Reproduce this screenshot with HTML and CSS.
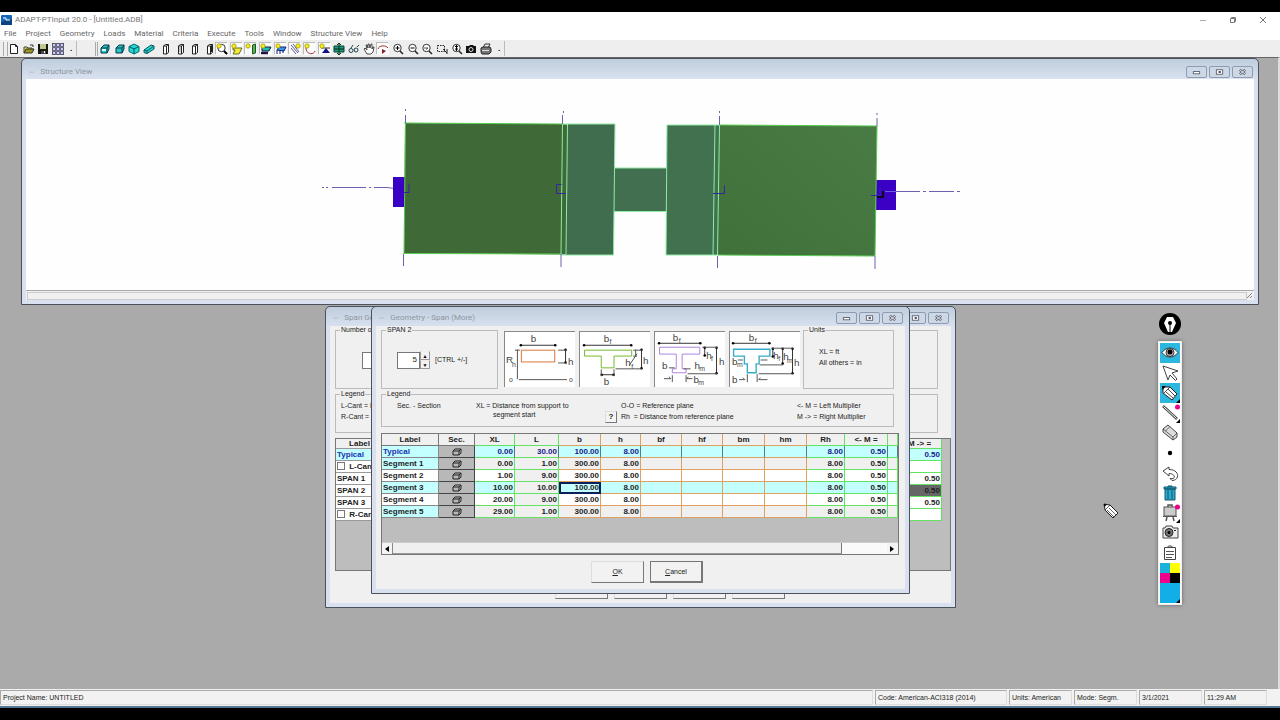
FILE: index.html
```
<!DOCTYPE html>
<html lang="en">
<head>
<meta charset="utf-8">
<title>ADAPT-PTInput 20.0 - [Untitled.ADB]</title>
<link rel="stylesheet" href="styles.css">
</head>
<body>
<svg class="defs" aria-hidden="true">
  <symbol id="min" viewBox="0 0 10 8"><rect x="1.5" y="3.5" width="7" height="2.5" fill="#fff" stroke="#5b6070"/></symbol>
  <symbol id="max" viewBox="0 0 10 8"><rect x="1.5" y="1.5" width="7" height="5" fill="#fff" stroke="#5b6070"/><rect x="4" y="3" width="2.500" height="2" fill="#445"/></symbol>
  <symbol id="cls" viewBox="0 0 10 8"><path d="M2 1.500l6 5M8 1.500l-6 5" stroke="#5b6070" stroke-width="2.600"/><path d="M2 1.500l6 5M8 1.500l-6 5" stroke="#fff"/></symbol>
  <symbol id="sec" viewBox="0 0 12 10"><path d="M2 4h6v4H2zM2 4l2-2h6v4L8 8M8 4l2-2" fill="none" stroke="#222"/></symbol>
  <symbol id="slab" viewBox="0 0 12 12"><path d="M2 5l3-3h5v4L8 10H2z" fill="#20c8c8" stroke="#134" /><path d="M2 5h6l2-3M8 5v5" fill="none" stroke="#134"/></symbol>
  <symbol id="col" viewBox="0 0 12 12"><path d="M3.500 3l2-1.500h3v8l-2 1.500h-3zM3.500 3h3v8M6.500 3l2-1.500" fill="#fff" stroke="#222"/></symbol>
  <symbol id="sun" viewBox="0 0 6 6"><circle cx="3" cy="3" r="2.200" fill="#f4ee20" stroke="#998c10" stroke-width=".7"/></symbol>
  <symbol id="lens" viewBox="0 0 12 12"><circle cx="5.500" cy="5" r="3.700" fill="#fff" stroke="#333"/><path d="M8 8l3 3" stroke="#222" stroke-width="1.500"/></symbol>
  <symbol id="arr" viewBox="0 0 4 4"><path d="M4 0v4H0z" fill="#000"/></symbol>
  <marker id="e" markerWidth="4" markerHeight="4" refX="2" refY="2"><circle cx="2" cy="2" r="1.300"/></marker>
</svg>

<div class="app">
  <header class="titlebar">
    <svg class="logo" viewBox="0 0 11 10"><rect width="11" height="10" rx="1" fill="#1667b8"/><path d="M0 7l11-3v6H0z" fill="#0b4384"/><path d="M2 3h3v2h4" stroke="#fff" fill="none"/></svg>
    <h1 class="apptitle">ADAPT-PTInput 20.0 - [Untitled.ADB]</h1>
    <div class="syscontrols">
      <button aria-label="Minimize"><svg viewBox="0 0 8 8"><path d="M1 4.500h6" stroke="#aaa"/></svg></button>
      <button aria-label="Restore"><svg viewBox="0 0 8 8"><path d="M1.500 2.500h4v4h-4zM2.500 2.500v-1h4v4h-1" fill="none" stroke="#777"/></svg></button>
      <button aria-label="Close"><svg viewBox="0 0 8 8"><path d="M1 1l6 6M7 1L1 7" stroke="#777"/></svg></button>
    </div>
  </header>
  <nav class="menubar">
    <button>File</button><button>Project</button><button>Geometry</button><button>Loads</button><button>Material</button><button>Criteria</button><button>Execute</button><button>Tools</button><button>Window</button><button>Structure View</button><button>Help</button>
  </nav>
  <div class="toolbar">
    <div class="group files">
      <button aria-label="New"><svg viewBox="0 0 12 12"><path d="M2.500 1.500h5l2 2v7h-7zM7.500 1.500v2h2" fill="#fff" stroke="#222"/></svg></button>
      <button aria-label="Open"><svg viewBox="0 0 12 12"><path d="M1 10V4h3l1 1h4v2" fill="#e8e060" stroke="#443"/><path d="M1 10l2-4h8l-2 4z" fill="#9a9420" stroke="#332"/><path d="M7 2h3v2" fill="none" stroke="#333"/></svg></button>
      <button aria-label="Save"><svg viewBox="0 0 12 12"><path d="M1 1h10v10H1z" fill="#16180e"/><path d="M3 1h6v5H3z" fill="#bfc690"/><path d="M4 8h5v3H4z" fill="#445"/><path d="M7 8h1v2H7z" fill="#fff"/></svg></button>
      <button aria-label="Calculator"><svg viewBox="0 0 12 12"><path d="M0 0h12v12H0z" fill="#556"/><path d="M1 1h2v2H1zM5 1h2v2H5zM9 1h2v2H9zM1 5h2v2H1zM5 5h2v2H5zM9 5h2v2H9zM1 9h2v2H1zM5 9h2v2H5zM9 9h2v2H9z" fill="#ccf"/><path d="M4 0v12M8 0v12M0 4h12M0 8h12" stroke="#88a" stroke-width=".8"/></svg></button>
    </div>
    <span class="more">.</span>
    <span class="sep"></span>
    <span class="grip"></span>
    <div class="group views">
      <button aria-label="Top view"><svg><use href="#slab"/><path d="M3 6h4v2H3z" fill="#cff"/></svg></button>
      <button aria-label="Front view"><svg><use href="#slab"/></svg></button>
      <button aria-label="Isometric"><svg viewBox="0 0 12 12"><path d="M6 1l5 2.500v5L6 11 1 8.500v-5z" fill="#20d8d8" stroke="#166"/><path d="M1 3.500L6 6l5-2.500M6 6v5" fill="none" stroke="#055"/></svg></button>
      <button aria-label="Slab"><svg viewBox="0 0 12 12"><path d="M1 7l7-5 3 1v3L4 10.500 1 9.500z" fill="#20d8d8" stroke="#155"/><path d="M1 7l3 1 7-5M4 8v2.500" fill="none" stroke="#155"/></svg></button>
    </div>
    <div class="group sections">
      <button aria-label="Section 1"><svg><use href="#col"/></svg></button>
      <button aria-label="Section 2"><svg><use href="#col"/><path d="M5 4v5" stroke="#888"/></svg></button>
      <button aria-label="Section 3"><svg><use href="#col"/></svg></button>
      <button aria-label="Section 4"><svg><use href="#col"/><path d="M7.500 3v6" stroke="#222" stroke-width="2"/></svg></button>
    </div>
    <div class="group tools">
      <button class="on" aria-label="Find"><svg><use href="#lens"/><use href="#sun" width="6" height="6"/><path d="M8 8l3 3" stroke="#000" stroke-width="2"/></svg></button>
      <button class="on" aria-label="Slab display"><svg><path d="M2 11l2-4H2V5h9L8 11z" fill="#f2ec30" stroke="#663"/><use href="#sun" width="6" height="6"/></svg></button>
      <button class="on" aria-label="Column display"><svg><path d="M7.500 2l3-1v9l-3 1z" fill="#50b850" stroke="#252"/><use href="#sun" width="6" height="6"/></svg></button>
      <button class="on" aria-label="Beam display"><svg><path d="M2 4h9l-2 4H2z" fill="#20bcb8" stroke="#123"/><path d="M1 10h7" stroke="#214" stroke-width="2.500"/><use href="#sun" width="6" height="6"/></svg></button>
      <button class="on" aria-label="Load display"><svg><path d="M2 7l2-3h7l-2 4z" fill="#39e" stroke="#127"/><path d="M2 7v4M5 7v4M8 7v3" stroke="#127"/><use href="#sun" width="6" height="6"/></svg></button>
      <button class="on" aria-label="Tendon display"><svg><path d="M2 2l7 8M4 1l6 8M2 5l5 6" stroke="#337" stroke-width=".8"/><use href="#sun" x="6" width="6" height="6"/></svg></button>
      <button class="on" aria-label="Curve"><svg><path d="M2 5c0 7 8 7 9 3" fill="none" stroke="#933"/><use href="#sun" width="6" height="6"/></svg></button>
      <button class="on" aria-label="Support"><svg><path d="M2 5h9" stroke="#333"/><path d="M7 5l4 5H3z" fill="#118"/><use href="#sun" width="6" height="6"/></svg></button>
      <button aria-label="Extrude"><svg><path d="M1 3h10v6H1z" fill="#219682" stroke="#043"/><path d="M6 0v12M4 2l2-2 2 2M4 10l2 2 2-2M1 6h10" fill="none" stroke="#031"/></svg></button>
      <button aria-label="Glasses"><svg><path d="M3 5L5 2M9 4l2-2M6 7h1" stroke="#245"/><circle cx="3" cy="7.500" r="2" fill="none" stroke="#245"/><circle cx="8" cy="7" r="2" fill="none" stroke="#245"/></svg></button>
      <button aria-label="Pan"><svg><path d="M4 11L1 6l1-1 2 2-1-5h1l1 3V1h1l1 4 1-4h1v5l1-2h1l-1 5-2 2z" fill="#fff" stroke="#222" stroke-width=".8"/></svg></button>
      <button class="on" aria-label="Rotate"><svg><path d="M1 6c1-4 8-4 10-1" fill="none" stroke="#933"/><path d="M5 6l4 2-4 3z" fill="#822"/></svg></button>
      <button aria-label="Zoom in"><svg><use href="#lens"/><path d="M3.500 5h4M5.500 3v4" stroke="#000"/></svg></button>
      <button aria-label="Zoom out"><svg><use href="#lens"/><path d="M3.500 5h4" stroke="#000"/></svg></button>
      <button aria-label="Zoom previous"><svg><use href="#lens"/><path d="M3 5h4l-2 1.500" fill="none" stroke="#555"/></svg></button>
      <button aria-label="Zoom window"><svg><path d="M1.500 2.500h7v6h-7z" fill="none" stroke="#222" stroke-dasharray="1.500 1"/><path d="M7 6l4 4M11 6v5" stroke="#222"/></svg></button>
      <button aria-label="Zoom extents"><svg><use href="#lens"/><path d="M5.500 2v6M4 3.500h3M4 6h3" stroke="#000"/></svg></button>
      <button aria-label="Camera"><svg><path d="M1 3h3l1-1h3l1 1h2v7H1z" fill="#111"/><circle cx="6" cy="6.500" r="2" fill="none" stroke="#ddd"/></svg></button>
      <button aria-label="Print"><svg><path d="M3 5l2-4h5L8 5z" fill="#eee" stroke="#333"/><path d="M1 5l2-1h7l1 2v3l-2 2H2L1 9z" fill="#777" stroke="#222"/><path d="M2 7.500h7" stroke="#ddd"/></svg></button>
    </div>
    <span class="more">.</span>
    <span class="sep"></span>
  </div>

  <main class="desktop">
    <section class="win structure">
      <div class="wintitle"><span class="dots">▫▫▫</span><h2>Structure View</h2>
        <div class="winbtns"><button aria-label="Minimize"><svg><use href="#min"/></svg></button><button aria-label="Maximize"><svg><use href="#max"/></svg></button><button aria-label="Close"><svg><use href="#cls"/></svg></button></div>
      </div>
      <svg class="drawing" viewBox="26 79 1228 211" role="img" aria-label="Plan of three spans">
        <defs>
          <linearGradient id="g" x1="0" y1="1" x2="1" y2="0"><stop offset="0" stop-color="#41713b"/><stop offset="1" stop-color="#497b44"/></linearGradient>
        </defs>
        <path d="M322 187.500h2M326 187.500h2M332 187.500h34M369 187.500h2M374 187.500h13l8 1M896 191.500h24M923 191.500h3M929 191.500h25M957 191.500h3" stroke="#6a62b0" fill="none"/>
        <path d="M393 177h12v30h-12zM876 180h20v30h-20z" fill="#3a00c4"/>
        <path d="M405 123L562 124 567 124.500V254.500L404 253z" fill="#3f6a37"/>
        <path d="M567 124H615L613.500 255H566z" fill="#416d4f"/>
        <path d="M614 168h53v43h-53z" fill="#426f50"/>
        <path d="M667 125h52v130h-53z" fill="#427150"/>
        <path d="M719 125l158 1-2 130-157-1z" fill="url(#g)"/>
        <path d="M405.500 123L404 254M404 123L562 124M404 253.500L562 254M719 125l158 1-2 130-157-1" stroke="#58cb50" fill="none"/>
        <path d="M562.500 124L561 254M567.500 124L566 254M562 124h53l-1.500 131H561M614 211.500h53M614 168h53M667 125h52M667 125l-1 130h52M715 125l-2 130M719.500 125l-2 130" stroke="#8deba3" fill="none"/>
        <path d="M405.500 109v2M405.500 115v8M403.500 254v12M563.500 111v2M562.500 115v9M561 254v13M719.500 111v2M719.500 116v9M717.500 256v12M877 113v2M877 118v8M875 256v13" stroke="#6c62b0" fill="none"/>
        <path d="M404 192.500h5v-9M566 193.500h-9.500v-9h5M713 193.500h11.500v-8M871 195.500h9v-8" stroke="#3426a0" fill="none"/>
        <path d="M877 197h6v-6" stroke="#100820" stroke-width="2" fill="none"/><path d="M885 191.500h11" stroke="#6a62e0"/>
      </svg>
      <div class="winstatus"><span></span><svg viewBox="0 0 6 7"><path d="M0 6l5-5M3 6l2-2" stroke="#888"/></svg></div>
    </section>

    <section class="win spans">
      <div class="wintitle"><span class="dots">▫▫▫</span><h2>Span Geometry</h2>
        <div class="winbtns"><button aria-label="Minimize"><svg><use href="#min"/></svg></button><button aria-label="Maximize"><svg><use href="#max"/></svg></button><button aria-label="Close"><svg><use href="#cls"/></svg></button></div>
      </div>
      <div class="body">
        <fieldset class="number"><legend>Number of Spans</legend><input class="count" type="text" value="3" aria-label="Number of spans"></fieldset>
        <fieldset class="backlegend"><legend>Legend</legend><p>L-Cant = Left Cantilever</p><p>R-Cant = Right Cantilever</p></fieldset>
        <div class="grid">
          <table class="back">
            <colgroup><col class="w-back"><col><col class="w-mult"></colgroup>
            <tr><th>Label</th><th></th><th>M -&gt; =</th></tr>
            <tr class="typical"><td class="name">Typical</td><td></td><td>0.50</td></tr>
            <tr><td class="name"><label><input type="checkbox"> L-Cant</label></td><td></td><td></td></tr>
            <tr><td class="name">SPAN 1</td><td></td><td>0.50</td></tr>
            <tr class="current"><td class="name">SPAN 2</td><td></td><td>0.50</td></tr>
            <tr><td class="name">SPAN 3</td><td></td><td>0.50</td></tr>
            <tr><td class="name"><label><input type="checkbox"> R-Cant</label></td><td></td><td></td></tr>
          </table>
        </div>
        <div class="actions"><button class="push">OK</button><button class="push">Cancel</button><button class="push">More</button><button class="push">Help</button></div>
      </div>
    </section>

    <section class="win segments">
      <div class="wintitle"><span class="dots">▫▫▫</span><h2>Geometry - Span (More)</h2>
        <div class="winbtns"><button aria-label="Minimize"><svg><use href="#min"/></svg></button><button aria-label="Maximize"><svg><use href="#max"/></svg></button><button aria-label="Close"><svg><use href="#cls"/></svg></button></div>
      </div>
      <div class="body">
        <div class="top">
          <fieldset class="span"><legend>SPAN 2</legend>
            <div class="spinrow"><input class="count" id="segs" type="text" value="5"><div class="spin"><button aria-label="More">▲</button><button aria-label="Fewer">▼</button></div><label for="segs">[CTRL +/-]</label></div>
          </fieldset>
          <div class="pics">
            <svg viewBox="0 0 71 56"><rect x="16.500" y="18.500" width="34" height="12" fill="#fff" stroke="#dd7435"/><g class="dim"><path d="M16 13.500H51M61.500 18V31"/><path class="plain" d="M12.500 18V48M10 18.500h5M54 18.500h9M54 31.500h9M14 48.500H63"/></g><text x="26" y="10">b</text><text x="1" y="32">R</text><text class="sub" x="7" y="36">h</text><text x="64" y="34">h</text><text class="sub" x="4" y="51">o</text><text class="sub" x="65" y="51">o</text></svg>
            <svg viewBox="0 0 71 56"><path d="M4.500 18.500H52.500V24.500H34.500V36.500H21.500V24.500H4.500z" fill="#fff" stroke="#74b92c"/><g class="dim"><path d="M4 13.500H52M22 43.500H34M62.500 18V37"/><path class="plain" d="M21.500 38v7M34.500 38v7M54 18.500h9M36 37.500h27M56.500 18v7M54 24.500h4M50 34l8-12"/></g><text x="24" y="10">b</text><text class="sub" x="30" y="12">f</text><text x="24" y="54">b</text><text x="46" y="35">h</text><text class="sub" x="52" y="38">f</text><text x="64" y="33">h</text></svg>
            <svg viewBox="0 0 71 56"><path d="M4.500 15.500H45.500V22.500H27.500V37.500H31.500V41.500H17.500V37.500H21.500V22.500H4.500z" fill="#fff" stroke="#ad83de"/><g class="dim"><path d="M4 11.500H46M62.500 16V42M50.500 16v8"/><path class="plain" d="M48 15.500h15M33 42.500h30M14 36.500h6M36 37.500h-7M17.500 44v7M31.500 44v7M9 47.500h7l-2-2M38 47.500h-6l2-2"/></g><text x="18" y="9">b</text><text class="sub" x="24" y="11">f</text><text x="7" y="38">b</text><text x="52" y="27">h</text><text class="sub" x="57" y="30">f</text><text x="65" y="34">h</text><text x="40" y="38">h</text><text class="sub" x="45" y="40">m</text><text x="39" y="52">b</text><text class="sub" x="44" y="54">m</text></svg>
            <svg viewBox="0 0 71 56"><path d="M3.500 17.500H40.500V24.500H29.500V32.500H26.500V41.500H17.500V32.500H14.500V24.500H3.500z" fill="#fff" stroke="#35adc9" stroke-width="1.400"/><g class="dim"><path d="M3 11.500H40M43.500 17v8M53.500 17v15M63.500 17V42"/><path class="plain" d="M42 16.500h22M30 33.500h24M29 42.500h35M8 28.500h5M31 28.500h7M17.500 43v8M27.500 43v8M9 48.500h6l-2-2M38 48.500h-9l2-2"/></g><text x="19" y="9">b</text><text class="sub" x="25" y="11">f</text><text x="2" y="34">b</text><text class="sub" x="7" y="36">m</text><text x="2" y="52">b</text><text x="44" y="27">h</text><text class="sub" x="49" y="30">f</text><text x="54" y="29">h</text><text class="sub" x="58" y="32">m</text><text x="65" y="35">h</text></svg>
          </div>
          <fieldset class="units"><legend>Units</legend><p>XL = ft</p><p>All others = in</p></fieldset>
        </div>
        <fieldset class="legendbox"><legend>Legend</legend>
          <p class="abbr">Sec. - Section</p>
          <p class="dist">XL = Distance from support to<br><span class="indent">segment start</span></p>
          <button class="help">?</button>
          <p>O-O = Reference plane<br>Rh&nbsp; = Distance from reference plane</p>
          <p>&lt;- M = Left Multiplier<br>M -&gt; = Right Multiplier</p>
        </fieldset>
        <div class="grid">
          <table class="front">
            <colgroup><col class="w57"><col class="w36"><col class="w40"><col class="w44"><col class="w42"><col class="w40"><col class="w41"><col class="w41"><col class="w42"><col class="w42"><col class="w38"><col class="w43"><col></colgroup>
            <tr><th>Label</th><th>Sec.</th><th class="g">XL</th><th class="g">L</th><th>b</th><th>h</th><th>bf</th><th>hf</th><th>bm</th><th>hm</th><th class="g">Rh</th><th class="g">&lt;- M =</th><th class="g"></th></tr>
            <tr class="typical cyan"><td class="name">Typical</td><td class="sec"><button aria-label="Section"><svg><use href="#sec"/></svg></button></td><td class="g">0.00</td><td class="g len">30.00</td><td>100.00</td><td>8.00</td><td></td><td></td><td></td><td></td><td class="g">8.00</td><td class="g">0.50</td><td class="g"></td></tr>
            <tr class="gray"><td class="name tint">Segment 1</td><td class="sec"><button aria-label="Section"><svg><use href="#sec"/></svg></button></td><td class="g">0.00</td><td class="g len">1.00</td><td>300.00</td><td>8.00</td><td></td><td></td><td></td><td></td><td class="g">8.00</td><td class="g">0.50</td><td class="g"></td></tr>
            <tr><td class="name">Segment 2</td><td class="sec"><button aria-label="Section"><svg><use href="#sec"/></svg></button></td><td class="g">1.00</td><td class="g len">9.00</td><td>300.00</td><td>8.00</td><td></td><td></td><td></td><td></td><td class="g">8.00</td><td class="g">0.50</td><td class="g"></td></tr>
            <tr class="cyan"><td class="name">Segment 3</td><td class="sec"><button aria-label="Section"><svg><use href="#sec"/></svg></button></td><td class="g">10.00</td><td class="g len">10.00</td><td class="active">100.00</td><td>8.00</td><td></td><td></td><td></td><td></td><td class="g">8.00</td><td class="g">0.50</td><td class="g"></td></tr>
            <tr><td class="name">Segment 4</td><td class="sec"><button aria-label="Section"><svg><use href="#sec"/></svg></button></td><td class="g">20.00</td><td class="g len">9.00</td><td>300.00</td><td>8.00</td><td></td><td></td><td></td><td></td><td class="g">8.00</td><td class="g">0.50</td><td class="g"></td></tr>
            <tr class="gray"><td class="name tint">Segment 5</td><td class="sec"><button aria-label="Section"><svg><use href="#sec"/></svg></button></td><td class="g">29.00</td><td class="g len">1.00</td><td>300.00</td><td>8.00</td><td></td><td></td><td></td><td></td><td class="g">8.00</td><td class="g">0.50</td><td class="g"></td></tr>
          </table>
          <div class="scroll"><button aria-label="Scroll left"><svg viewBox="0 0 4 6"><path d="M4 0v6L0 3z"/></svg></button><span class="thumb"></span><button class="right" aria-label="Scroll right"><svg viewBox="0 0 4 6"><path d="M0 0v6l4-3z"/></svg></button></div>
        </div>
        <div class="actions"><button class="push"><u>O</u>K</button><button class="push default"><u>C</u>ancel</button></div>
      </div>
    </section>

    <svg class="cursor" viewBox="0 0 16 16"><path d="M1 1l6 1 8 8-5 5-8-8z" fill="#fff" stroke="#222"/><path d="M1 1l3 .5L1.500 4z" fill="#000"/><path d="M7 2l-5 5M6 5l7 7M4 7l7 7" fill="none" stroke="#222" stroke-width=".7"/></svg>

    <aside class="pen">
      <button class="badge" aria-label="Epic Pen"><svg viewBox="0 0 22 22"><circle cx="11" cy="11" r="11"/><path d="M8 4h6l3 6-4 9H9L5 10z" fill="#fff"/><path d="M11 10v9" stroke="#000"/><circle cx="11" cy="10" r="2"/></svg></button>
      <div class="strip">
        <button class="sel" aria-label="Show"><svg viewBox="0 0 20 20"><path d="M2 9.500c4-6 12-6 16 0-4 6-12 6-16 0z" fill="#fff" stroke="#333"/><circle cx="10" cy="9.500" r="4" fill="#bbb" stroke="#333"/><circle cx="10" cy="9" r="2.500"/></svg></button>
        <button aria-label="Cursor"><svg viewBox="0 0 20 20"><path d="M3 3l15 5-6 2 5 6-1.500 1.500L10 12l-2 5z" fill="#fff" stroke="#444"/></svg></button>
        <button class="sel" aria-label="Pen"><svg viewBox="0 0 20 20"><path d="M3 4l7 0 7 7-5 6-9-7z" fill="#fff" stroke="#222"/><path d="M8 6l7 7M6 9l7 6M10 4l-6 6" fill="none" stroke="#222" stroke-width=".8"/><path d="M2 3h4L2.500 7z"/><use href="#arr" x="16" y="16" width="4" height="4"/></svg></button>
        <button aria-label="Line"><svg viewBox="0 0 20 20"><path d="M3 3l14 13" stroke="#444" stroke-width="2.600"/><path d="M3.500 3.500l13 12" stroke="#fff"/><circle cx="17.500" cy="4" r="2.500" fill="#ec008c"/><use href="#arr" x="16" y="16" width="4" height="4"/></svg></button>
        <button aria-label="Eraser"><svg viewBox="0 0 20 20"><path d="M3 6l5-4 9 8v4l-4 3-10-8z" fill="#ddd" stroke="#444"/><path d="M3 6l10 8 4-4M13 14v3M5.500 8l4-4" fill="none" stroke="#444" stroke-width=".8"/></svg></button>
        <button aria-label="Size"><svg viewBox="0 0 20 20"><circle cx="10" cy="10" r="2.200"/></svg></button>
        <button aria-label="Undo"><svg viewBox="0 0 20 20"><path d="M3 8l6-4v2.500c11 0 11 11 3 11l-2-2c7 1 5-5-1-5V13z" fill="#fff" stroke="#444"/></svg></button>
        <button aria-label="Clear"><svg viewBox="0 0 20 20"><path d="M5 6h10v11H5zM4 4h12v2H4zM8 4V3h4v1" fill="#29abd0" stroke="#13566c"/><path d="M8 7v9M12 7v9" stroke="#13566c"/></svg></button>
        <button aria-label="Board"><svg viewBox="0 0 20 20"><path d="M7 14l-1 4M13 14l1 4M8 4V2h4v2" fill="none" stroke="#555" stroke-width="1.500"/><rect x="4" y="4" width="12" height="9" fill="#ccc" stroke="#555"/><path d="M3 13.500h14" stroke="#555"/><circle cx="17.500" cy="4" r="2.500" fill="#ec008c"/><use href="#arr" x="16" y="16" width="4" height="4"/></svg></button>
        <button aria-label="Screenshot"><svg viewBox="0 0 20 20"><path d="M3 5h2l1-2h6l1 2h5v10H3z" fill="#eee" stroke="#444"/><circle cx="9" cy="9.500" r="4" fill="#777" stroke="#222"/><circle cx="9" cy="9.500" r="1.500"/><path d="M14 7.500h2" stroke="#222"/></svg></button>
        <button aria-label="Clipboard"><svg viewBox="0 0 20 20"><path d="M4.500 4.500h11v12h-11zM7 5l1.500-2h3L13 5" fill="#fff" stroke="#444"/><path d="M6 8.500h8M6 11.500h8M6 14.500h6" stroke="#555"/></svg></button>
        <div class="swatches"><button class="c1" aria-label="Cyan"></button><button class="c2" aria-label="Yellow"></button><button class="c3" aria-label="Magenta"></button><button class="c4" aria-label="Black"></button></div>
        <button class="colour" aria-label="Current colour"><svg viewBox="0 0 20 20"><use href="#arr" x="16" y="16" width="4" height="4"/></svg></button>
      </div>
    </aside>
  </main>

  <footer class="statusbar">
    <span class="project">Project Name: UNTITLED</span><span class="code">Code: American-ACI318 (2014)</span><span>Units: American</span><span>Mode: Segm.</span><span>3/1/2021</span><span>11:29 AM</span>
  </footer>
</div>
</body>
</html>
```
FILE: styles.css
```
* { box-sizing: border-box; }
body { margin: 0; background: #000; color: #222; font: 7px/10px "Liberation Sans", Arial, sans-serif; }
button, input { font: inherit; color: inherit; margin: 0; padding: 0; border: 0; background: none; border-radius: 0; }
h1, h2, p { margin: 0; font-size: inherit; font-weight: normal; }
svg { display: block; }
.defs { position: absolute; width: 0; height: 0; }

.app { display: flex; flex-direction: column; min-height: 100vh; padding: 12px 0; }

.titlebar { display: flex; align-items: center; height: 15px; padding: 0 13px 0 1px; gap: 3px; background: #fff; }
.logo { width: 11px; height: 10px; }
.apptitle { flex: 1; color: #777; font: 8px/10px Roboto, sans-serif; }
.syscontrols { display: flex; gap: 22px; }
.syscontrols svg { width: 8px; height: 8px; }

.menubar { display: flex; align-items: center; height: 13px; padding-left: 4px; gap: 9px; background: #fff; color: #666; font: 8px/10px Roboto, sans-serif; }

.toolbar { display: flex; align-items: center; height: 17px; background: #eeeeee; }
.toolbar::before, .grip { content: ""; width: 3px; height: 14px; border-left: 1px solid #aaa; border-right: 1px solid #aaa; }
.toolbar::before { margin-left: 3px; }
.group { display: flex; justify-content: space-between; }
.group svg { width: 12px; height: 12px; }
.group .on { background: #fbfbfb; box-shadow: -1px -1px 0 #bbb; }
.files { width: 56px; }
.views { width: 56px; }
.sections { width: 56px; margin-left: 5px; }
.tools { width: 276px; }
.more { width: 12px; padding-left: 6px; color: #000; font-size: 8px; font-weight: bold; }
.sep { width: 1px; height: 15px; background: #bbb; }
.grip { margin: 0 1px 0 18px; }

.desktop { position: relative; flex: 1; overflow: hidden; background: #aaa; border-top: 1px solid #666; border-right: 2px solid #ddd; }
.win { position: absolute; padding: 0 4px 4px; background: linear-gradient(#bfcddc, #d9e1f0 20px); border: 1px solid #4c525c; border-radius: 5px 5px 0 0; }
.wintitle { display: flex; align-items: center; height: 19px; padding: 3px 2px 0 3px; gap: 6px; color: #8d95a2; font: 8px/10px Roboto, sans-serif; }
.wintitle h2 { flex: 1; }
.dots { font-size: 5px; color: #a5adba; }
.winbtns { display: flex; gap: 2px; }
.winbtns button { width: 21px; height: 12px; padding: 1px 5px; border: 1px solid #8f9cb0; border-radius: 2px; background: #cdd8e6; }
.winbtns svg { width: 9px; height: 8px; }

.structure { display: flex; flex-direction: column; left: 21px; right: 19px; top: 0; height: 247px; }
.structure .wintitle { height: 20px; padding: 5px 1px 0 3px; }
.drawing { flex: 1; min-height: 0; width: 100%; background: #fefefe; }
.winstatus { display: flex; height: 10px; padding: 1px; background: #f0f0f0; border-top: 1px solid #aaa; }
.winstatus span { flex: 1; height: 8px; border: 1px solid #ccc; }
.winstatus svg { width: 6px; height: 7px; }

.spans { left: 325px; top: 248px; width: 631px; }
.segments { left: 371px; top: 248px; width: 539px; }
.body { background: #f0f0f0; padding: 0 6px 6px 5px; }
.spans .body { padding-right: 0; }

fieldset { margin: 0; padding: 0; min-width: 0; border: 1px solid #bbb; }
legend { margin-left: 4px; padding: 0 1px; line-height: 8px; }
.number { height: 63px; margin-right: 13px; padding-top: 18px; }
.number .count { margin-left: 26px; }
.backlegend { height: 43px; margin: 1px 13px 0 0; padding-top: 2px; }
.backlegend p { margin-left: 5px; line-height: 11px; }
.top { display: flex; margin-right: 5px; }
.span { flex: none; width: 117px; height: 63px; padding-top: 17px; }
.spinrow { display: flex; align-items: center; margin-left: 15px; }
.count { width: 23px; height: 17px; padding: 0 2px 2px 0; text-align: right; font-size: 8px; background: #fff; border: 1px solid #777; }
.spin { display: flex; flex-direction: column; margin-right: 5px; }
.spin button { width: 10px; height: 9px; font-size: 5px; line-height: 6px; border: 1px solid #999; border-top-color: #eee; background: #f2f2f2; color: #000; }
.pics { flex: 1; display: flex; justify-content: space-between; padding: 5px 3px 0 6px; }
.pics svg { width: 71px; height: 56px; background: #fff; border-top: 1px solid #888; border-left: 1px solid #888; }
.pics text { font: 10px "Liberation Sans", Arial, sans-serif; fill: #444; }
.pics .sub { font-size: 7px; }
.dim path { fill: none; stroke: #333; stroke-width: 1; marker: url(#e); }
.dim .plain { stroke: #555; marker: none; }
.units { flex: none; width: 91px; height: 63px; padding-top: 12px; }
.units p { margin-left: 15px; line-height: 11px; }
.legendbox { display: grid; grid-template-columns: 15px 79px 129px 16px 176px 1fr; height: 37px; margin: 1px 5px 0 0; padding-top: 2px; line-height: 11px; }
.abbr { grid-column: 2; }
.dist { padding-top: 1px; line-height: 9px; }
.indent { padding-left: 17px; }
.help { width: 12px; height: 12px; margin-top: 11px; font-size: 8px; font-weight: bold; line-height: 10px; border: 1px solid #777; border-top-color: #ddd; border-left-color: #ddd; background: #f4f4f4; }

.grid { height: 122px; margin-top: 6px; display: flex; flex-direction: column; justify-content: space-between; background: #bdbdbd; border: 1px solid #777; }
.spans .grid { height: 133px; margin-top: 5px; }
table { width: 100%; table-layout: fixed; border-collapse: separate; border-spacing: 0; font-size: 8px; font-weight: bold; }
th, td { height: 12px; padding: 0 1px 0 0; line-height: 10px; overflow: hidden; white-space: nowrap; border-right: 1px solid #dfa060; border-bottom: 1px solid #dfa060; }
td { text-align: right; background: #fff; }
th { padding: 0; text-align: center; background: #f0f0f0; }
.w57 { width: 57px; } .w36 { width: 36px; } .w38 { width: 38px; } .w40 { width: 40px; } .w41 { width: 41px; } .w42 { width: 42px; } .w43 { width: 43px; } .w44 { width: 44px; }
.front .g { border-color: #62e362; }
.cyan td { background: #c4ffff; }
.gray td { background: #f0f0f0; }
.front .len { background: #f0f0f0; }
td.name, .gray td.tint { padding-left: 1px; text-align: left; border-color: #888; }
.gray td.tint { background: #c4ffff; }
.front th:nth-child(-n+2) { border-color: #777; }
.front td.sec { padding: 0; background: #b8b8b8; border-color: #444; }
.sec button { display: block; width: 100%; height: 11px; }
.sec svg { width: 12px; height: 10px; margin: 0 auto; }
.typical td { color: #16208c; }
.front .typical td:nth-child(n+3) { border-right-color: #5c7880; }
.typical .name { color: #2030b0; }
.front .active { padding: 0; border: 2px solid #0a1f5c; line-height: 8px; }
.scroll { display: flex; height: 12px; background: #fafafa; border-top: 1px solid #ccc; }
.scroll button { width: 11px; padding-left: 3px; background: #f4f4f4; border-right: 1px solid #888; }
.scroll svg { width: 4px; height: 6px; }
.thumb { flex: 1; margin-right: 45px; background: #f0f0f0; border-right: 1px solid #777; border-bottom: 1px solid #999; }
.scroll .right { border-right: 0; }

.back { width: calc(100% - 8px); }
.w-back { width: 48px; }
.w-mult { width: 44px; }
.back th, .back td { border-color: #62e362; }
.back th { height: 10px; line-height: 9px; }
.back td.name, .back th:first-child { border-color: #999; }
.back .typical td { background: #c4ffff; }
.back .current td:last-child { background: #666; }
.back input { width: 8px; height: 8px; margin: 0 2px 0 0; vertical-align: top; appearance: none; background: #fff; border: 1px solid #777; }

.actions { display: flex; justify-content: center; gap: 6px; margin: 6px 0 0 14px; }
.spans .actions { height: 20px; padding-left: 54px; margin-left: 0; }
.push { width: 53px; height: 22px; background: #f2f2f2; border: 1px solid #ddd; border-right-color: #777; border-bottom-color: #777; }
.default { border: 1px solid #777; border-right-width: 2px; border-bottom-width: 2px; }

.cursor { position: absolute; left: 1103px; top: 445px; width: 16px; height: 16px; }
.pen { position: absolute; right: 96px; top: 255px; width: 24px; }
.badge { display: block; width: 22px; height: 22px; margin: 0 1px 6px; }
.strip { padding: 1px; border: 1px solid #eee; background: #fff; box-shadow: 0 0 4px #666; }
.strip button { display: block; width: 100%; height: 20px; }
.strip > button svg { width: 20px; height: 20px; }
.strip .sel { background: #2cb8de; }
.swatches { display: grid; grid-template-columns: 1fr 1fr; }
.strip .swatches button { height: 10px; }
.swatches .c1 { background: #1cb0dc; }
.swatches .c2 { background: #ffff00; }
.swatches .c3 { background: #ec008c; }
.swatches .c4 { background: #000; }
.strip .colour { background: #12aee8; }

.statusbar { display: flex; gap: 2px; height: 19px; padding: 1px 13px 1px 0; background: #f2f2f2; border-bottom: 2px solid #54788f; }
.statusbar span { flex: 0 0 63px; padding: 2px 2px; border: 1px solid #aaa; border-right-color: #ddd; border-bottom-color: #ddd; white-space: nowrap; }
.statusbar .project { flex: 1; }
.statusbar .code { flex-basis: 132px; }
```
